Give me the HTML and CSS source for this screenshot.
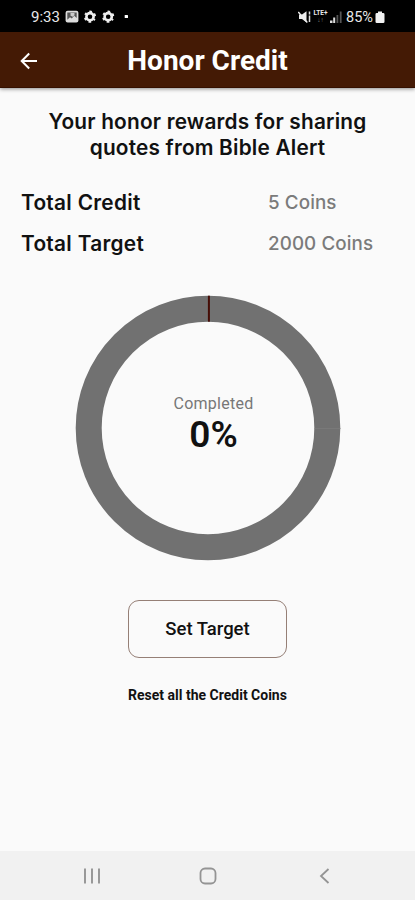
FILE: index.html
```html
<!DOCTYPE html>
<html lang="en">
<head>
    <meta charset="UTF-8">
    <meta name="viewport" content="width=device-width, initial-scale=1.0">
    <title>Honor Credit</title>
    <link rel="stylesheet" href="styles.css">
</head>
<body>
    <div class="status-bar">
        <span class="time">9:33</span>
        <svg class="status-left" width="66" height="14" viewBox="0 0 66 14">
            <rect x="0.6" y="0.8" width="12.8" height="11.6" rx="2" fill="#ddd"/>
            <path d="M2.300 2.500h9.400v5.500l-2.500-2.300-2.400 2.800-1.800-1.300-2.700 2.500z" fill="#555"/>
            <path d="M5.500 3h4v2.200l-1.800 1.500-2.200-1z" fill="#ccc"/>
            <g fill="none" stroke="#eee">
                <circle cx="25" cy="6.700" r="3.600" stroke-width="2.600"/>
                <circle cx="25" cy="6.700" r="5" stroke-width="2.200" stroke-dasharray="2.400 2.836" stroke-dashoffset="1.200" transform="rotate(30 25 6.700)"/>
                <circle cx="43.200" cy="6.700" r="3.600" stroke-width="2.600"/>
                <circle cx="43.200" cy="6.700" r="5" stroke-width="2.200" stroke-dasharray="2.400 2.836" stroke-dashoffset="1.200" transform="rotate(30 43.200 6.700)"/>
            </g>
            <rect x="59.700" y="5" width="3.300" height="3" rx="0.500" fill="#fff"/>
        </svg>
        <svg class="sound" width="14" height="14" viewBox="0 0 14 14">
            <path d="M1 4.500h3l4.500-3.300v11.300L4 9H1z" fill="#eee"/>
            <path d="M.3 2l9 10.500" stroke="#eee" stroke-width="1.300"/>
            <path d="M11.500 1.500v3M11.500 5.500v6.500" stroke="#ddd" stroke-width="1.500"/>
        </svg>
        <span class="network">
            <span>LTE+</span>
            <span class="arrows">↓↑</span>
        </span>
        <svg class="signal" width="14" height="14" viewBox="0 0 14 14">
            <path d="M1 13v-2.500h2.500V13zM4.200 13V7.500h2V13z" fill="#ddd"/>
            <path d="M7.500 13V5h1.800v8zM10.800 13V1.500h1.800V13z" fill="#555"/>
        </svg>
        <span class="percent">85%</span>
        <svg class="battery" width="10" height="13" viewBox="0 0 10 13">
            <path d="M3 .5h4V2h1.200q1.300 0 1.300 1.300v7.400q0 1.300-1.300 1.300H1.800Q.5 12 .5 10.700V3.300Q.5 2 1.800 2H3z" fill="#f2f2f2"/>
        </svg>
    </div>

    <header class="app-bar">
        <svg class="back" width="18" height="18" viewBox="0 0 18 18">
            <path d="M17 9H2M9.200 1.500L1.700 9l7.500 7.500" fill="none" stroke="#fff" stroke-width="2"/>
        </svg>
        <h1>Honor Credit</h1>
    </header>

    <main>
        <h2>Your honor rewards for sharing<br>quotes from Bible Alert</h2>

        <div class="totals">
            <span class="label">Total Credit</span>
            <span class="value">5 Coins</span>
            <span class="label">Total Target</span>
            <span class="value">2000 Coins</span>
        </div>

        <div class="chart">
            <svg class="ring" width="266" height="266" viewBox="0 0 266 266">
                <circle cx="133" cy="133" r="119.300" fill="none" stroke="#717171" stroke-width="26"/>
                <path d="M239.500 133.500h26" stroke="#7c7c7c" stroke-width="0.700"/>
                <path d="M133.900 0.700v26" stroke="#460d06" stroke-width="2"/>
            </svg>
            <div class="chart-text">
                <span class="completed">Completed</span>
                <span class="progress">0%</span>
            </div>
        </div>

        <button class="set-target">Set Target</button>
        <button class="reset">Reset all the Credit Coins</button>
    </main>

    <nav class="nav-bar">
        <svg width="18" height="18" viewBox="0 0 18 18">
            <path d="M2 1.500v15M9 1.500v15M16 1.500v15" fill="none" stroke="#949494" stroke-width="1.900"/>
        </svg>
        <svg width="18" height="18" viewBox="0 0 18 18">
            <rect x="1.500" y="1.500" width="15" height="15" rx="4.500" fill="none" stroke="#949494" stroke-width="1.800"/>
        </svg>
        <svg width="18" height="18" viewBox="0 0 18 18">
            <path d="M13.500 2L6 9l7.500 7" fill="none" stroke="#949494" stroke-width="1.800"/>
        </svg>
    </nav>
</body>
</html>
```

FILE: styles.css
```css
* {
    box-sizing: border-box;
}

body {
    display: flex;
    flex-direction: column;
    height: 100vh;
    margin: 0;
    background-color: #fafafa;
    color: #111;
    font-family: Inter, sans-serif;
    overflow: hidden;
}

h1,
h2 {
    margin: 0;
}

.status-bar {
    display: flex;
    align-items: center;
    flex: none;
    height: 32px;
    padding: 2px 30px 0 31px;
    background-color: #000;
    color: #e8e8e8;
    font-family: Roboto, sans-serif;
    font-size: 15px;
}

.time {
    width: 34px;
}

.sound {
    margin-left: auto;
}

.network {
    display: flex;
    flex-direction: column;
    align-items: center;
    width: 17px;
    font-size: 6.5px;
    font-weight: 700;
    line-height: 7px;
}

.arrows {
    color: #777;
}

.signal {
    margin-right: 3px;
}

.percent {
    width: 28px;
    font-size: 14.5px;
    white-space: nowrap;
}

.battery {
    margin-left: 1px;
}

.app-bar {
    display: grid;
    grid-template-columns: 60px 1fr 60px;
    align-items: center;
    flex: none;
    height: 56px;
    padding-top: 2px;
    background-color: #441a05;
    border-bottom: 1px solid #351000;
    box-shadow: 0 1px 4px rgba(0, 0, 0, 0.45);
    color: #fff;
}

.back {
    margin-left: 20px;
}

.app-bar h1 {
    font-family: Roboto, sans-serif;
    font-size: 28px;
    font-weight: 700;
    text-align: center;
}

main {
    display: flex;
    flex-direction: column;
    align-items: center;
    flex: 1;
    padding-top: 21px;
}

h2 {
    font-size: 20.8px;
    font-weight: 600;
    letter-spacing: 0.2px;
    line-height: 25.5px;
    text-align: center;
}

.totals {
    display: grid;
    grid-template-columns: 247px 1fr;
    width: 100%;
    margin-top: 23px;
    padding-left: 21px;
    line-height: 40.5px;
}

.label {
    font-size: 20.8px;
    font-weight: 600;
    letter-spacing: 0.3px;
}

.value {
    color: #7b7b7b;
    font-size: 18.8px;
    font-weight: 500;
    letter-spacing: 0.1px;
}

.chart {
    display: grid;
    place-items: center;
    margin-top: 31px;
}

.ring,
.chart-text {
    grid-area: 1 / 1;
}

.chart-text {
    display: flex;
    flex-direction: column;
    align-items: center;
    padding: 0 0 7px 12px;
    font-family: Roboto, sans-serif;
}

.completed {
    color: #777;
    font-size: 16px;
    letter-spacing: 0.25px;
    line-height: 20px;
}

.progress {
    font-size: 37px;
    font-weight: 600;
    line-height: 42px;
}

button {
    border: none;
    background: none;
    color: #111;
    font-family: Roboto, sans-serif;
    cursor: pointer;
}

.set-target {
    width: 159px;
    height: 58px;
    margin-top: 39px;
    border: 1px solid #957f76;
    border-radius: 11px;
    font-size: 18.5px;
    font-weight: 500;
}

.reset {
    margin-top: 28px;
    padding: 0;
    font-size: 14px;
    font-weight: 700;
    line-height: 18px;
}

.nav-bar {
    display: grid;
    grid-template-columns: repeat(3, 116px);
    justify-content: center;
    justify-items: center;
    align-items: center;
    flex: none;
    height: 49px;
    padding-top: 1px;
    background-color: #f1f1f1;
}
```
